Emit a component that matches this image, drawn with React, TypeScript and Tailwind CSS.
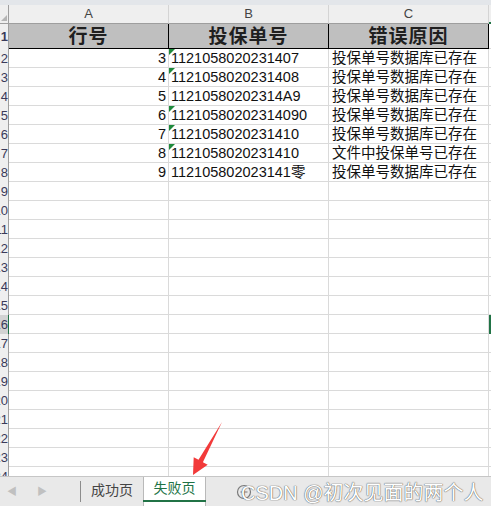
import React from 'react';

const FONT = { fontFamily: '"Liberation Sans", "Noto Sans CJK SC", sans-serif' };

const ROWS: { n: string; id: string; msg: string; flag: boolean }[] = [
  { n: '3', id: '1121058020231407', msg: '投保单号数据库已存在', flag: true },
  { n: '4', id: '1121058020231408', msg: '投保单号数据库已存在', flag: true },
  { n: '5', id: '11210580202314A9', msg: '投保单号数据库已存在', flag: false },
  { n: '6', id: '11210580202314090', msg: '投保单号数据库已存在', flag: true },
  { n: '7', id: '1121058020231410', msg: '投保单号数据库已存在', flag: true },
  { n: '8', id: '1121058020231410', msg: '文件中投保单号已存在', flag: true },
  { n: '9', id: '112105802023141零', msg: '投保单号数据库已存在', flag: false },
];

const TOTAL_ROWS = 23;
const SELECTED = 14;

// row numbers sit mostly off-screen, only their right edge peeks out
function RowHead({ label, selected }: { label: string; selected?: boolean }) {
  return (
    <div
      className={`w-[9px] shrink-0 flex justify-end items-center overflow-hidden border-r text-[13px] text-[#3a3a5a] ${
        selected ? 'bg-[#d2d2d2] border-[#217346]' : 'bg-[#efefef] border-[#9e9e9e]'
      }`}
    >
      <span className="leading-none">{label}</span>
    </div>
  );
}

export default function App() {
  const rows = Array.from({ length: TOTAL_ROWS }, (_, i) => ROWS[i]);

  return (
    <div className="relative w-[491px] h-[506px] overflow-hidden bg-white flex flex-col" style={FONT}>
      {/* top strip */}
      <div className="h-[5px] bg-[#e3e6ea] shrink-0" />

      {/* column letters */}
      <div className="flex h-[19px] shrink-0 text-[13px] text-[#444]">
        <div className="w-[9px] bg-[#efefef] border-r border-b border-[#9e9e9e] relative">
          <div className="absolute right-[1px] bottom-[2px] w-0 h-0 border-l-[6px] border-l-transparent border-b-[6px] border-b-[#b5b5b5]" />
        </div>
        {['A', 'B', 'C'].map((c) => (
          <div
            key={c}
            className="w-[160px] shrink-0 bg-[#efefef] border-r border-r-[#d4d4d4] border-b border-b-[#9e9e9e] flex items-center justify-center"
          >
            {c}
          </div>
        ))}
        <div className="flex-1 bg-[#efefef] border-b-2 border-[#217346]" />
      </div>

      {/* header row */}
      <div className="flex h-[25px] shrink-0 text-[19px] font-bold text-[#1f1f1f]">
        <RowHead label="1" />
        {['行号', '投保单号', '错误原因'].map((h) => (
          <div
            key={h}
            className="w-[160px] shrink-0 bg-[#bfbfbf] border-r border-b border-black flex items-center justify-center leading-none tracking-[1px]"
          >
            {h}
          </div>
        ))}
        <div className="flex-1 border-b border-[#dadada]" />
      </div>

      {/* data grid */}
      <div className="h-[427px] overflow-hidden shrink-0">
        {rows.map((r, i) => (
          <div key={i} className="flex h-[19px] text-[14.5px] text-[#111] leading-[18px]">
            <RowHead label={String(i + 2)} selected={i === SELECTED} />
            <div className="w-[160px] shrink-0 border-r border-b border-[#dadada] flex justify-end items-end pr-[2px]">
              {r?.n}
            </div>
            <div className="relative w-[160px] shrink-0 border-r border-b border-[#dadada] flex items-end pl-[2px] whitespace-nowrap">
              {r?.flag && (
                <div className="absolute left-0 top-0 w-0 h-0 border-t-[6px] border-t-[#1e8a3c] border-r-[6px] border-r-transparent" />
              )}
              {r?.id}
            </div>
            <div className="w-[160px] shrink-0 border-r border-b border-[#dadada] flex items-end pl-[3px] whitespace-nowrap">
              {r?.msg}
            </div>
            <div
              className={`flex-1 border-b border-[#dadada] ${
                i === SELECTED ? 'border-l-[3px] border-l-[#217346] border-y-2 border-y-[#217346]' : ''
              }`}
            />
          </div>
        ))}
      </div>

      {/* sheet tabs */}
      <div className="h-[30px] shrink-0 bg-[#e9e9e9] border-t border-[#c6c6c6] flex items-stretch text-[14px]">
        <div className="w-[80px] flex items-center gap-[20px] pl-[7px] text-[10px] text-[#c0c0c0]">
          <span>◀</span>
          <span>▶</span>
        </div>
        <div className="my-[4px] border-l border-[#8c8c8c]" />
        <div className="w-[62px] flex items-center justify-center text-[#444] pb-[2px]">成功页</div>
        <div className="w-[63px] bg-white border-x border-[#b9b9b9] flex flex-col">
          <div className="flex-1 flex items-center justify-center text-[#217346]">失败页</div>
          <div className="h-[2px] bg-[#217346] mb-[4px] mx-[-1px]" />
        </div>
        <div className="relative flex-1 flex items-center pl-[30px]">
          <svg width="16" height="16" viewBox="0 0 16 16" className="text-[#7a7a7a]">
            <circle cx="8" cy="8" r="6.5" fill="none" stroke="currentColor" strokeWidth="1.2" />
            <path d="M8 4.5v7M4.5 8h7" stroke="currentColor" strokeWidth="1.2" />
          </svg>
          <div className="absolute left-[35px] top-[1px] text-[20px] text-white whitespace-nowrap [text-shadow:0_0_1px_#555,0_0_1px_#555]">
            CSDN @初次见面的两个人
          </div>
        </div>
      </div>

      {/* red arrow annotation */}
      <svg className="absolute left-0 top-0 pointer-events-none" width="491" height="506">
        <polygon
          points="222,422 202.9,462.2 207.7,464.8 193,475 193.7,457.2 198.5,459.8"
          fill="#f23a3a"
        />
      </svg>
    </div>
  );
}
